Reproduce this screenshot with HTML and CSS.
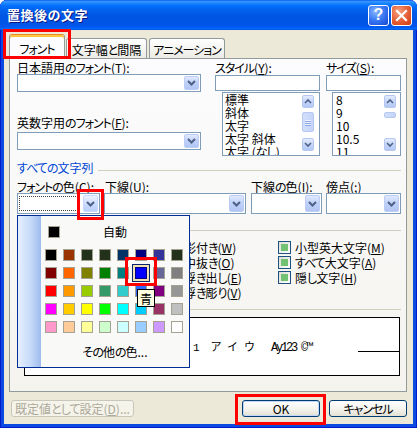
FILE: index.html
```html
<!DOCTYPE html>
<html lang="ja">
<head>
<meta charset="utf-8">
<title>置換後の文字</title>
<link rel="stylesheet" href="styles.css">
</head>
<body>
<div class="window">
  <div class="titlebar">
    <span class="title">置換後の文字</span>
    <div class="tb-buttons">
      <span class="tb-btn help">?</span>
      <span class="tb-btn close"><svg width="13" height="13" viewBox="0 0 13 13"><path d="M2 2 L11 11 M11 2 L2 11" stroke="#fff" stroke-width="2.2" stroke-linecap="square"/></svg></span>
    </div>
  </div>

  <div class="client">
    <div class="tabs">
      <div class="tab active"><span class="k">フォント</span></div>
      <div class="tab t2">文字幅<span class="k">と</span>間隔</div>
      <div class="tab t3"><span class="k">アニメーション</span></div>
    </div>

    <div class="panel">
      <div class="top">
        <div class="col-font">
          <div class="lbl">日本語用<span class="k">のフォント</span>(<u>T</u>):</div>
          <div class="combo h18"><span class="field"></span><span class="dd"><svg width="9" height="6" viewBox="0 0 9 6"><path d="M1 1 L4.5 4.5 L8 1" fill="none" stroke="#4d6185" stroke-width="2"/></svg></span></div>
          <div class="lbl lbl2">英数字用<span class="k">のフォント</span>(<u>F</u>):</div>
          <div class="combo h18"><span class="field"></span><span class="dd"><svg width="9" height="6" viewBox="0 0 9 6"><path d="M1 1 L4.5 4.5 L8 1" fill="none" stroke="#4d6185" stroke-width="2"/></svg></span></div>
        </div>
        <div class="col-style">
          <div class="lbl"><span class="k">スタイル</span>(<u>Y</u>):</div>
          <div class="edit"></div>
          <div class="list">
            <div class="items">
              <div>標準</div>
              <div>斜体</div>
              <div>太字</div>
              <div>太字 斜体</div>
              <div>太字 (<span class="k">なし</span>)</div>
            </div>
            <div class="vscroll vs-style">
              <span class="sb-btn"><svg width="8" height="5" viewBox="0 0 8 5"><path d="M1 4 L4 1 L7 4" fill="none" stroke="#4d6185" stroke-width="1.6"/></svg></span>
              <span class="thumb long"><i></i><i></i><i></i></span>
              <span class="sb-btn down"><svg width="8" height="5" viewBox="0 0 8 5"><path d="M1 1 L4 4 L7 1" fill="none" stroke="#4d6185" stroke-width="1.6"/></svg></span>
            </div>
          </div>
        </div>
        <div class="col-size">
          <div class="lbl"><span class="k">サイズ</span>(<u>S</u>):</div>
          <div class="edit"></div>
          <div class="list">
            <div class="items sizes">
              <div>8</div>
              <div>9</div>
              <div>10</div>
              <div>10.5</div>
              <div>11</div>
            </div>
            <div class="vscroll vs-size">
              <span class="sb-btn"><svg width="8" height="5" viewBox="0 0 8 5"><path d="M1 4 L4 1 L7 4" fill="none" stroke="#4d6185" stroke-width="1.6"/></svg></span>
              <span class="thumb short"></span>
              <span class="sb-btn down"><svg width="8" height="5" viewBox="0 0 8 5"><path d="M1 1 L4 4 L7 1" fill="none" stroke="#4d6185" stroke-width="1.6"/></svg></span>
            </div>
          </div>
        </div>
      </div>

      <div class="group-head gh1"><span class="k">すべての</span>文字列<span class="rule"></span></div>

      <div class="fields">
        <div class="fld f1">
          <div class="lbl"><span class="k">フォントの</span>色(<u>C</u>):</div>
          <div class="combo h21 color"><span class="field"><span class="focus"></span></span><span class="dd hot"><svg width="9" height="6" viewBox="0 0 9 6"><path d="M1 1 L4.5 4.5 L8 1" fill="none" stroke="#4d6185" stroke-width="2"/></svg></span></div>
        </div>
        <div class="fld f2">
          <div class="lbl">下線(<u>U</u>):</div>
          <div class="combo h21"><span class="field"></span><span class="dd"><svg width="9" height="6" viewBox="0 0 9 6"><path d="M1 1 L4.5 4.5 L8 1" fill="none" stroke="#4d6185" stroke-width="2"/></svg></span></div>
        </div>
        <div class="fld f3">
          <div class="lbl">下線<span class="k">の</span>色(<u>I</u>):</div>
          <div class="combo h21"><span class="field"></span><span class="dd"><svg width="9" height="6" viewBox="0 0 9 6"><path d="M1 1 L4.5 4.5 L8 1" fill="none" stroke="#4d6185" stroke-width="2"/></svg></span></div>
        </div>
        <div class="fld f4">
          <div class="lbl">傍点(<u>;</u>)</div>
          <div class="combo h21"><span class="field"></span><span class="dd"><svg width="9" height="6" viewBox="0 0 9 6"><path d="M1 1 L4.5 4.5 L8 1" fill="none" stroke="#4d6185" stroke-width="2"/></svg></span></div>
        </div>
      </div>

      <div class="group-head gh2">文字飾<span class="k">り</span><span class="rule"></span></div>

      <div class="effects">
        <div class="cb-row"><span class="cb"></span>取<span class="k">り</span>消<span class="k">し</span>線(<u>K</u>)</div>
        <div class="cb-row"><span class="cb"></span>二重取<span class="k">り</span>消<span class="k">し</span>線(<u>G</u>)</div>
        <div class="cb-row"><span class="cb"></span>上付<span class="k">き</span>(<u>P</u>)</div>
        <div class="cb-row"><span class="cb"></span>下付<span class="k">き</span>(<u>B</u>)</div>
        <div class="cb-row"><span class="cb"></span>影付<span class="k">き</span>(<u>W</u>)</div>
        <div class="cb-row"><span class="cb"></span>中抜<span class="k">き</span>(<u>O</u>)</div>
        <div class="cb-row"><span class="cb"></span>浮<span class="k">き</span>出<span class="k">し</span>(<u>E</u>)</div>
        <div class="cb-row"><span class="cb"></span>浮<span class="k">き</span>彫<span class="k">り</span>(<u>V</u>)</div>
        <div class="cb-row"><span class="cb"></span>小型英大文字(<u>M</u>)</div>
        <div class="cb-row"><span class="cb"></span><span class="k">すべて</span>大文字(<u>A</u>)</div>
        <div class="cb-row"><span class="cb"></span>隠<span class="k">し</span>文字(<u>H</u>)</div>
      </div>

      <div class="group-head gh3"><span class="k">プレビュー</span><span class="rule"></span></div>

      <div class="preview">
        <div class="pv-text"><span class="pv-num">1</span><span class="pv-kana">アイウ</span><span class="pv-lat">Ay123 ©™</span></div>
        <span class="pv-line"></span>
      </div>
    </div>

    <div class="buttons">
      <button class="btn disabled">既定値<span class="k">として</span>設定(<u>D</u>)...</button>
      <button class="btn ok">OK</button>
      <button class="btn cancel"><span class="k">キャンセル</span></button>
    </div>
  </div>

  <div class="popup">
    <div class="pp-strip"></div>
    <div class="pp-body">
      <div class="pp-auto"><span class="sw" style="background:#000"></span><span class="pp-auto-t">自動</span><span></span></div>
      <div class="pp-grid">
        <span class="sw" style="background:#000000"></span>
        <span class="sw" style="background:#993300"></span>
        <span class="sw" style="background:#22311a"></span>
        <span class="sw" style="background:#22311a"></span>
        <span class="sw" style="background:#003366"></span>
        <span class="sw" style="background:#000080"></span>
        <span class="sw" style="background:#333399"></span>
        <span class="sw" style="background:#22311a"></span>

        <span class="sw" style="background:#800000"></span>
        <span class="sw" style="background:#ff6600"></span>
        <span class="sw" style="background:#808000"></span>
        <span class="sw" style="background:#008000"></span>
        <span class="sw" style="background:#008080"></span>
        <span class="sw sel" style="background:#0000ff"></span>
        <span class="sw" style="background:#666699"></span>
        <span class="sw" style="background:#808080"></span>

        <span class="sw" style="background:#ff0000"></span>
        <span class="sw" style="background:#ff9900"></span>
        <span class="sw" style="background:#99cc00"></span>
        <span class="sw" style="background:#339966"></span>
        <span class="sw" style="background:#33cccc"></span>
        <span class="sw" style="background:#3366ff"></span>
        <span class="sw" style="background:#800080"></span>
        <span class="sw" style="background:#969696"></span>

        <span class="sw" style="background:#ff00ff"></span>
        <span class="sw" style="background:#ffcc00"></span>
        <span class="sw" style="background:#ffff00"></span>
        <span class="sw" style="background:#00ff00"></span>
        <span class="sw" style="background:#00ffff"></span>
        <span class="sw" style="background:#00ccff"></span>
        <span class="sw" style="background:#993366"></span>
        <span class="sw" style="background:#c0c0c0"></span>

        <span class="sw" style="background:#ff99cc"></span>
        <span class="sw" style="background:#ffcc99"></span>
        <span class="sw" style="background:#ffff99"></span>
        <span class="sw" style="background:#ccffcc"></span>
        <span class="sw" style="background:#ccffff"></span>
        <span class="sw" style="background:#99ccff"></span>
        <span class="sw" style="background:#cc99ff"></span>
        <span class="sw" style="background:#ffffff"></span>
      </div>
      <div class="pp-more"><span class="k">その</span>他<span class="k">の</span>色...</div>
    </div>
  </div>

  <div class="tip">青</div>

  <div class="mark m-tab"></div>
  <div class="mark m-dd"></div>
  <div class="mark m-sw"></div>
  <div class="mark m-ok"></div>
</div>
</body>
</html>
```

FILE: styles.css
```css
* { box-sizing: border-box; }

html, body {
  margin: 0;
  padding: 0;
}

body {
  width: 417px;
  height: 428px;
  overflow: hidden;
  background: #ffffff;
  font-family: "Noto Sans CJK JP", "Noto Sans", sans-serif;
  font-size: 12px;
  line-height: 13px;
  color: #000;
}

u { text-decoration: underline; text-underline-offset: 1px; }

/* narrower, proportional kana, like the system UI font */
.k {
  font-feature-settings: "palt" 1;
  letter-spacing: -1px;
}

.window {
  position: relative;
  width: 417px;
  height: 428px;
  display: flex;
  flex-direction: column;
  background: #0a4ae0;
  border-radius: 7px 7px 0 0;
  overflow: hidden;
  box-shadow: inset 1px 0 0 #0019cf, inset -1px 0 0 #0019cf, inset 0 -1px 0 #0019cf;
}

/* Title bar */
.titlebar {
  height: 30px;
  flex: none;
  display: flex;
  align-items: center;
  padding: 0 5px 0 7px;
  background: linear-gradient(#0058ee 0%, #3a93ff 4%, #288eff 8%, #127dff 14%, #036ffc 20%, #0262ee 32%, #0057e5 50%, #0054e3 70%, #0055eb 86%, #005bf5 92%, #026afe 95%, #0062ef 97%, #0052d6 100%);
  color: #fff;
}

.title {
  flex: 1;
  font-weight: bold;
  font-size: 13px;
  line-height: 16px;
  letter-spacing: 0.5px;
  text-shadow: 1px 1px 0 #0a1883;
}

.tb-buttons {
  display: flex;
  gap: 2px;
}

.tb-btn {
  width: 21px;
  height: 21px;
  border: 1px solid #fff;
  border-radius: 3px;
  display: flex;
  align-items: center;
  justify-content: center;
}

.help {
  background: radial-gradient(circle at 35% 30%, #8ab8ff 0%, #3d7cf5 45%, #2258e0 80%, #1a48c8 100%);
  color: #fff;
  font-family: "Liberation Sans", sans-serif;
  font-weight: bold;
  font-size: 16px;
  line-height: 16px;
}

.close {
  background: radial-gradient(circle at 35% 30%, #f7a383 0%, #e8673f 45%, #d9491f 80%, #c23c18 100%);
}

/* Client area */
.client {
  flex: 1;
  margin: 0 4px 4px;
  background: #ece9d8;
  display: flex;
  flex-direction: column;
  padding: 4px 6px 7px 5px;
}

/* Tabs */
.tabs {
  display: flex;
  align-items: flex-end;
  height: 25px;
  margin-bottom: -1px;
  position: relative;
  z-index: 1;
}

.tab {
  height: 20px;
  margin-bottom: 1px;
  border: 1px solid #919b9c;
  border-bottom: none;
  border-radius: 3px 3px 0 0;
  background: linear-gradient(#ffffff, #ecebe6);
  display: flex;
  align-items: center;
  justify-content: center;
  padding-top: 1px;
  white-space: nowrap;
  overflow: hidden;
}

.tab.active {
  width: 56px;
  height: 25px;
  margin-bottom: 0;
  margin-right: 1px;
  background: #fcfcfe;
  border-top: 1px solid #e68b2c;
  box-shadow: inset 0 2px 0 #ffc83c;
  padding-top: 2px;
}

.tab.t2 { width: 81px; margin-right: 2px; }
.tab.t3 { width: 76px; }

/* Panel */
.panel {
  height: 334px;
  flex: none;
  border: 1px solid #919b9c;
  background: linear-gradient(#fcfcfe, #f4f3ee);
  padding: 2px 5px 0 7px;
}

.lbl { line-height: 13px; white-space: nowrap; }

.top { display: flex; }

.col-font {
  width: 184px;
  margin-right: 14px;
  display: flex;
  flex-direction: column;
}

.lbl2 { margin-top: 24px; margin-bottom: 3px; }

.col-style { width: 105px; margin-right: 6px; }
.col-size { width: 75px; }

.combo {
  display: flex;
  border: 1px solid #7f9db9;
  background: #fff;
  padding: 1px 1px 1px 2px;
}

.combo.h18 { height: 18px; }
.combo.h21 { height: 21px; }

.combo .field { flex: 1; }

.dd {
  width: 15px;
  height: 100%;
  border: 1px solid #bccdf5;
  border-radius: 2px;
  background: linear-gradient(#e1e9fd, #c0d2fa 45%, #b2c6f4);
  display: flex;
  align-items: center;
  justify-content: center;
}

.dd.hot {
  border-color: #c6d8ff;
  background: linear-gradient(#eef3ff, #cfdeff 45%, #b9cffc);
}

.color .field {
  margin: 1px 5px 1px -1px;
  display: flex;
}

.color .focus {
  flex: 1;
  border: 1px dotted #444;
}

.edit {
  height: 16px;
  margin-top: 1px;
  border: 1px solid #7f9db9;
  background: #fff;
}

.list {
  height: 64px;
  margin-top: 1px;
  margin-left: 7px;
  border: 1px solid #7f9db9;
  background: #fff;
  display: flex;
  overflow: hidden;
}

.col-size .list { margin-left: 6px; }

.items {
  flex: 1;
  padding-left: 2px;
  line-height: 13px;
  white-space: nowrap;
  overflow: hidden;
}

.items.sizes { padding-left: 3px; }

.vscroll {
  width: 12px;
  margin: 2px 5px 0 0;
  display: flex;
  flex-direction: column;
}

.vs-size { margin-right: 4px; }

.sb-btn {
  height: 13px;
  border: 1px solid #b6c8f0;
  border-radius: 2px;
  background: linear-gradient(#e3ebfd, #c4d5fa 50%, #b4c8f5);
  display: flex;
  align-items: center;
  justify-content: center;
}

.thumb {
  margin-top: 4px;
  border: 1px solid #b6c8f0;
  border-radius: 2px;
  background: linear-gradient(to right, #d2defb, #c4d4fa);
  display: flex;
  flex-direction: column;
  align-items: center;
  justify-content: center;
  gap: 1px;
}

.thumb i {
  display: block;
  width: 6px;
  height: 1px;
  background: #eef3ff;
  box-shadow: 0 1px 0 #8ca7e4;
}

.thumb.long { height: 20px; }
.thumb.short { height: 6px; }

.vs-style .down { margin-top: 6px; }
.vs-size .down { margin-top: 20px; }

/* Group headers */
.group-head {
  display: flex;
  align-items: flex-start;
  color: #0046d5;
  line-height: 13px;
  white-space: nowrap;
}

.group-head .rule {
  flex: 1;
  height: 1px;
  background: #d0d0bf;
  margin: 9px 0 0 5px;
}

.gh1 { margin-top: 5px; }
.gh2 { margin-top: 7px; }
.gh3 { margin-top: 0; }

/* Fields row */
.fields {
  display: flex;
  margin-top: 6px;
}

.fld { display: flex; flex-direction: column; }
.f1 { width: 83px; margin-right: 4px; }
.f2 { width: 142px; margin-right: 5px; }
.f3 { width: 71px; margin-right: 4px; }
.f4 { width: 75px; }
.f2 .lbl { padding-left: 1px; }

/* Effects */
.effects {
  display: grid;
  grid-template-columns: 143px 111px 1fr;
  grid-template-rows: repeat(4, 15px);
  grid-auto-flow: column;
  margin-top: 6px;
  padding-left: 7px;
}

.cb-row {
  display: flex;
  align-items: center;
  height: 15px;
  white-space: nowrap;
}

.cb {
  width: 13px;
  height: 13px;
  flex: none;
  border: 1px solid #1c5180;
  background: linear-gradient(135deg, #dcdcd6, #ffffff);
  margin-right: 4px;
  display: flex;
  align-items: center;
  justify-content: center;
}

.cb::after {
  content: "";
  width: 7px;
  height: 7px;
  background: #73c173;
}

/* Preview */
.preview {
  height: 59px;
  margin: 4px 1px 0 7px;
  border: 1px solid #000;
  background: #fff;
  display: flex;
  align-items: flex-start;
  padding: 21px 0 0 168px;
}

.pv-text {
  line-height: 14px;
  white-space: nowrap;
}

.pv-num {
  font-family: "Liberation Mono", monospace;
  font-size: 11px;
  margin-right: 11px;
}

.pv-kana {
  font-size: 11px;
  letter-spacing: 6px;
}

.pv-lat {
  font-family: "Liberation Mono", monospace;
  font-size: 12px;
  letter-spacing: -2.2px;
  margin-left: 10px;
}

.pv-line {
  margin-left: auto;
  margin-top: 12px;
  width: 41px;
  height: 1px;
  background: #000;
}

/* Bottom buttons */
.buttons {
  display: flex;
  margin-top: 8px;
  padding-left: 2px;
  height: 17px;
}

.btn {
  height: 17px;
  border: 1px solid #003c74;
  border-radius: 3px;
  background: linear-gradient(#ffffff, #f4f3ee 55%, #e3e0d2);
  font-family: inherit;
  font-size: 12px;
  line-height: 13px;
  color: #000;
  padding: 0;
  display: flex;
  align-items: center;
  justify-content: center;
}

.btn.disabled {
  width: 123px;
  border-color: #c9c7ba;
  color: #aca899;
  background: #f5f4ea;
}

.btn.ok {
  width: 78px;
  margin-left: auto;
  box-shadow: inset 0 0 0 1px #c4d6f8;
}

.btn.cancel {
  width: 78px;
  margin-left: 9px;
}

/* Colour popup */
.popup {
  position: absolute;
  left: 17px;
  top: 215px;
  width: 173px;
  height: 153px;
  border: 1px solid #002d96;
  background: #f9f9f7;
  display: flex;
  z-index: 5;
}

.pp-strip {
  width: 23px;
  background: linear-gradient(to right, #e6f0ff, #c6daf9 55%, #9dbbed);
}

.pp-body {
  flex: 1;
  padding-top: 9px;
}

.pp-auto {
  display: grid;
  grid-template-columns: 12px 1fr 12px;
  align-items: center;
  height: 12px;
  padding: 0 7px;
}

.pp-auto-t {
  text-align: center;
  line-height: 13px;
}

.pp-grid {
  display: grid;
  grid-template-columns: repeat(8, 12px);
  grid-auto-rows: 12px;
  gap: 6px;
  margin: 12px 0 0 4px;
}

.sw {
  display: block;
  width: 12px;
  height: 12px;
  border: 1px solid #a6a293;
}

.sw.sel {
  border-color: #000080;
  box-shadow: 0 0 0 2px #f1e1b6, 0 0 0 3px #0a246a;
}

.pp-more {
  margin-top: 12px;
  text-align: center;
  line-height: 14px;
}

/* Tooltip */
.tip {
  position: absolute;
  left: 137px;
  top: 289px;
  width: 18px;
  height: 18px;
  background: #ffffe1;
  border: 1px solid #000;
  display: flex;
  align-items: center;
  justify-content: center;
  line-height: 13px;
  z-index: 6;
}

/* Red annotation boxes */
.mark {
  position: absolute;
  border: 3px solid #ff0000;
  z-index: 10;
}

.m-tab { left: 3px; top: 29px; width: 68px; height: 30px; }
.m-dd { left: 77px; top: 189px; width: 27px; height: 31px; }
.m-sw { left: 125px; top: 257px; width: 32px; height: 29px; }
.m-ok { left: 235px; top: 394px; width: 91px; height: 31px; }
```
